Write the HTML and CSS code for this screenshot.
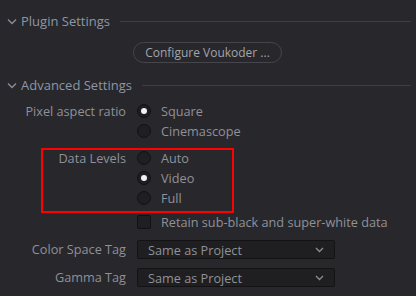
FILE: index.html
```html
<!DOCTYPE html>
<html lang="en">
<head>
  <meta charset="UTF-8" />
  <title>Render Settings</title>
  <link rel="stylesheet" href="styles.css">
</head>
<body>
  <div class="panel">
    <div class="section-header first">
      <svg class="chevron" width="10" height="7" viewBox="0 0 10 7"><path d="M1 1.5 L5 5.5 L9 1.5" fill="none" stroke="#8a8f98" stroke-width="1.3"/></svg>
      <span class="section-title">Plugin Settings</span>
      <span class="section-line"></span>
    </div>
    <div class="button-row">
      <button class="pill-button">Configure Voukoder ...</button>
    </div>

    <div class="section-header second">
      <svg class="chevron" width="10" height="7" viewBox="0 0 10 7"><path d="M1 1.5 L5 5.5 L9 1.5" fill="none" stroke="#8a8f98" stroke-width="1.3"/></svg>
      <span class="section-title">Advanced Settings</span>
      <span class="section-line"></span>
    </div>

    <div class="field aspect">
      <div class="field-label">Pixel aspect ratio</div>
      <div class="options">
        <div class="option"><span class="radio checked"></span>Square</div>
        <div class="option"><span class="radio"></span>Cinemascope</div>
      </div>
    </div>

    <div class="field levels">
      <div class="highlight"></div>
      <div class="field-label">Data Levels</div>
      <div class="options">
        <div class="option"><span class="radio"></span>Auto</div>
        <div class="option"><span class="radio checked"></span>Video</div>
        <div class="option"><span class="radio"></span>Full</div>
      </div>
    </div>

    <div class="field retain">
      <div class="field-label"></div>
      <div class="options">
        <div class="option"><span class="checkbox"></span>Retain sub-black and super-white data</div>
      </div>
    </div>

    <div class="field select-field first-select">
      <div class="field-label">Color Space Tag</div>
      <div class="dropdown">
        <span>Same as Project</span>
        <svg width="9" height="6" viewBox="0 0 9 6"><path d="M1 1 L4.5 4.5 L8 1" fill="none" stroke="#8a8d93" stroke-width="1.3"/></svg>
      </div>
    </div>

    <div class="field select-field second-select">
      <div class="field-label">Gamma Tag</div>
      <div class="dropdown">
        <span>Same as Project</span>
        <svg width="9" height="6" viewBox="0 0 9 6"><path d="M1 1 L4.5 4.5 L8 1" fill="none" stroke="#8a8d93" stroke-width="1.3"/></svg>
      </div>
    </div>
  </div>
</body>
</html>
```

FILE: styles.css
```css
body {
  margin: 0;
  background-color: #28272c;
  color: #8e9197;
  font-family: "Open Sans", "DejaVu Sans", sans-serif;
  font-size: 12.7px;
  overflow: hidden;
}
.panel {
  display: flex;
  flex-direction: column;
  width: 416px;
  height: 296px;
}
.section-header {
  display: flex;
  align-items: center;
  height: 20px;
  padding-left: 7px;
  padding-right: 5px;
}
.section-header.first {
  margin-top: 11px;
}
.section-header.second {
  margin-top: 12px;
}
.chevron {
  margin-right: 4px;
  margin-top: 1px;
}
.section-title {
  font-size: 13px;
  color: #8c97a6;
}
.section-line {
  flex: 1;
  height: 1px;
  background-color: #3f3e44;
  margin-left: 10px;
}
.button-row {
  margin-top: 11px;
  padding-left: 133px;
}
.pill-button {
  height: 21px;
  width: 149px;
  padding: 0;
  border: 1px solid #46454b;
  border-radius: 11px;
  background-color: #28272c;
  color: #a3a5aa;
  font-family: "Open Sans", "DejaVu Sans", sans-serif;
  font-size: 12px;
}
.field {
  display: flex;
  position: relative;
}
.field-label {
  width: 126px;
  flex-shrink: 0;
  text-align: right;
  line-height: 20px;
  height: 20px;
}
.options {
  display: flex;
  flex-direction: column;
  margin-left: 11px;
}
.option {
  display: flex;
  align-items: center;
  height: 20px;
  color: #8f9298;
}
.aspect {
  margin-top: 6px;
}
.levels {
  margin-top: 7px;
}
.retain {
  margin-top: 4px;
}
.radio {
  width: 14px;
  height: 14px;
  box-sizing: border-box;
  border-radius: 50%;
  background-color: #1f1f21;
  border: 1px solid #121214;
  margin-right: 10px;
  display: flex;
  align-items: center;
  justify-content: center;
}
.radio.checked::after {
  content: "";
  width: 6px;
  height: 6px;
  border-radius: 50%;
  background-color: #f2f2f2;
}
.checkbox {
  width: 14px;
  height: 14px;
  box-sizing: border-box;
  border-radius: 2px;
  background-color: #1f1f21;
  border: 1px solid #121214;
  margin-right: 10px;
}
.highlight {
  position: absolute;
  left: 41px;
  top: 0;
  width: 193px;
  height: 65px;
  box-sizing: border-box;
  border: 2px solid #ff0000;
}
.select-field .field-label {
  line-height: 19px;
  height: 19px;
}
.first-select {
  margin-top: 8px;
}
.second-select {
  margin-top: 9px;
}
.dropdown {
  display: flex;
  align-items: center;
  justify-content: space-between;
  margin-left: 11px;
  width: 198px;
  height: 19px;
  box-sizing: border-box;
  border: 1px solid #131315;
  border-radius: 2px;
  background-color: #1f1f22;
  padding-left: 10px;
  padding-right: 10px;
  color: #8f9298;
}
```
